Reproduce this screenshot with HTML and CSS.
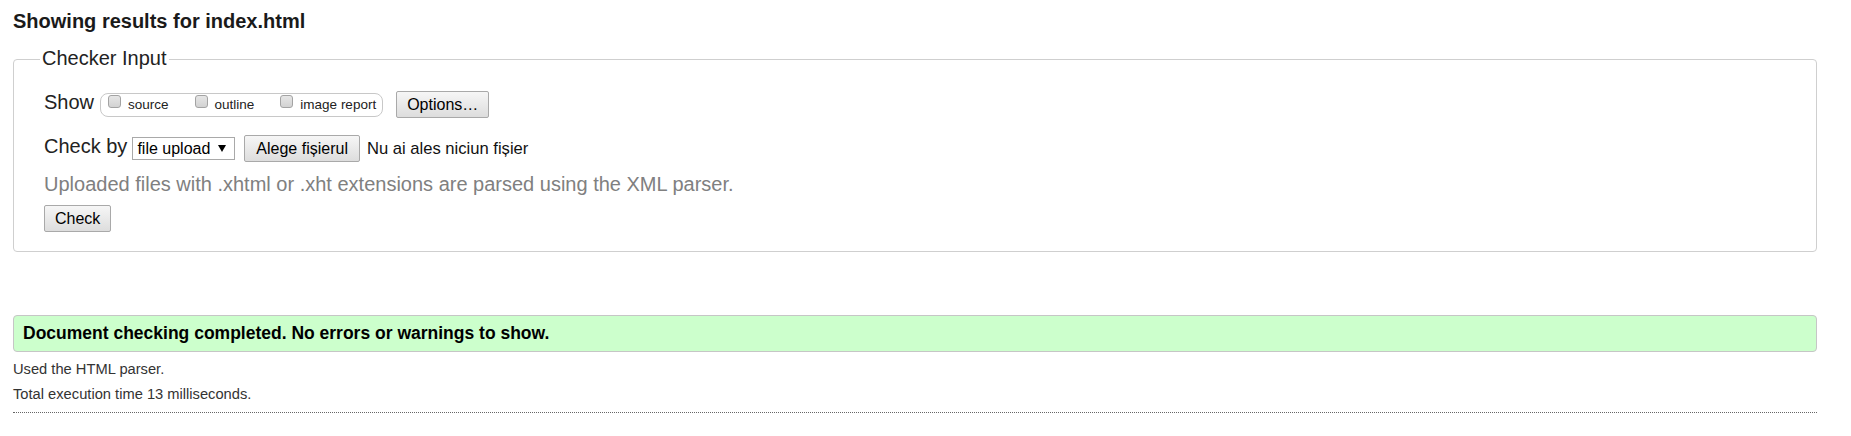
FILE: index.html
```html
<!DOCTYPE html>
<html lang="en">
<head>
<meta charset="utf-8">
<title>Showing results for index.html - Nu Html Checker</title>
<link rel="stylesheet" href="styles.css">
</head>
<body>
<div class="page">
  <h2 class="title">Showing results for index.html</h2>
  <fieldset class="checker">
    <legend>Checker Input</legend>
    <div class="inner">
      <div class="row">
        <span class="label">Show</span>
        <span class="opts">
          <label class="opt"><span class="cb"></span>source</label>
          <label class="opt"><span class="cb"></span>outline</label>
          <label class="opt"><span class="cb"></span>image report</label>
        </span>
        <button class="btn btn-options" type="button">Options…</button>
      </div>
      <div class="row row-check">
        <span class="label">Check by</span>
        <span class="select">file upload<svg class="arrow" width="8" height="7" viewBox="0 0 8 7"><path d="M0 0H8L4 7Z" fill="#000"/></svg></span>
        <button class="btn btn-file" type="button">Alege fișierul</button>
        <span class="nofile">Nu ai ales niciun fișier</span>
      </div>
      <p class="hint">Uploaded files with .xhtml or .xht extensions are parsed using the XML parser.</p>
      <button class="btn btn-check" type="button">Check</button>
    </div>
  </fieldset>
  <div class="success">Document checking completed. No errors or warnings to show.</div>
  <p class="meta">Used the HTML parser.</p>
  <p class="meta">Total execution time 13 milliseconds.</p>
  <div class="rule"></div>
</div>
</body>
</html>
```

FILE: styles.css
```css
* { box-sizing: border-box; }

body {
  margin: 0;
  background: #fff;
  color: #222;
  font-family: Arial, "Liberation Sans", sans-serif;
}

.page {
  padding: 9px 34px 0 13px;
}

.title {
  margin: 0;
  font-size: 20px;
  line-height: 24px;
  font-weight: bold;
  color: #1a1a1a;
}

.checker {
  margin: 14px 0 0;
  padding: 19px 26px 19px;
  border: 1px solid #cfcfcf;
  border-radius: 4px;
  min-width: 0;
}

.checker legend {
  font-size: 20px;
  line-height: 22px;
  padding: 0 2px 3px;
  color: #222;
}

.inner {
  padding-left: 4px;
}

.row {
  display: flex;
  align-items: center;
  height: 27px;
}

.row-check {
  margin-top: 17px;
}

.label {
  font-size: 20px;
  line-height: 23px;
  padding-bottom: 4px;
  color: #222;
}

.opts {
  display: flex;
  align-items: center;
  height: 24px;
  margin-left: 6px;
  padding: 0 6px 0 6px;
  border: 1px solid #c8c8c8;
  border-radius: 8px;
}

.opt {
  display: flex;
  align-items: center;
  height: 22px;
  font-size: 13.5px;
  line-height: 15px;
  color: #222;
  margin-right: 25px;
}

.opt:last-child {
  margin-right: 0;
}

.cb {
  align-self: flex-start;
  width: 13px;
  height: 13px;
  margin: 1px 7px 0 1px;
  border: 1px solid #a3a3a3;
  border-radius: 3px;
  background: linear-gradient(#e6e6e6, #d2d2d2);
}

.btn {
  height: 27px;
  padding: 0 10px;
  font-family: Arial, "Liberation Sans", sans-serif;
  font-size: 16px;
  color: #000;
  border: 1px solid #a9a9a9;
  border-radius: 2px;
  background: linear-gradient(#f6f6f6, #dddddd);
}

.btn-options {
  margin-left: 13px;
}

.select {
  display: flex;
  align-items: center;
  height: 23px;
  margin-left: 5px;
  padding: 0 8px 0 4px;
  border: 1px solid #a9a9a9;
  background: #fff;
  font-size: 16px;
  color: #000;
}

.arrow {
  margin-left: 8px;
}

.btn-file {
  margin-left: 9px;
  padding: 0 11px;
}

.nofile {
  margin-left: 7px;
  font-size: 16.6px;
  color: #111;
}

.hint {
  margin: 11px 0 9px;
  font-size: 20px;
  line-height: 23px;
  color: #808080;
}

.btn-check {
  display: block;
}

.success {
  display: flex;
  align-items: center;
  height: 37px;
  margin-top: 63px;
  padding: 0 9px 1px;
  border: 1px solid #c6c6c6;
  border-radius: 4px;
  background: #ccffcc;
  font-size: 17.5px;
  font-weight: bold;
  color: #000;
}

.meta {
  margin: 0;
  font-size: 14.7px;
  line-height: 25px;
  color: #333;
}

.success + .meta {
  margin-top: 5px;
}

.rule {
  margin-top: 5px;
  border-top: 1px dotted #666;
}
```
